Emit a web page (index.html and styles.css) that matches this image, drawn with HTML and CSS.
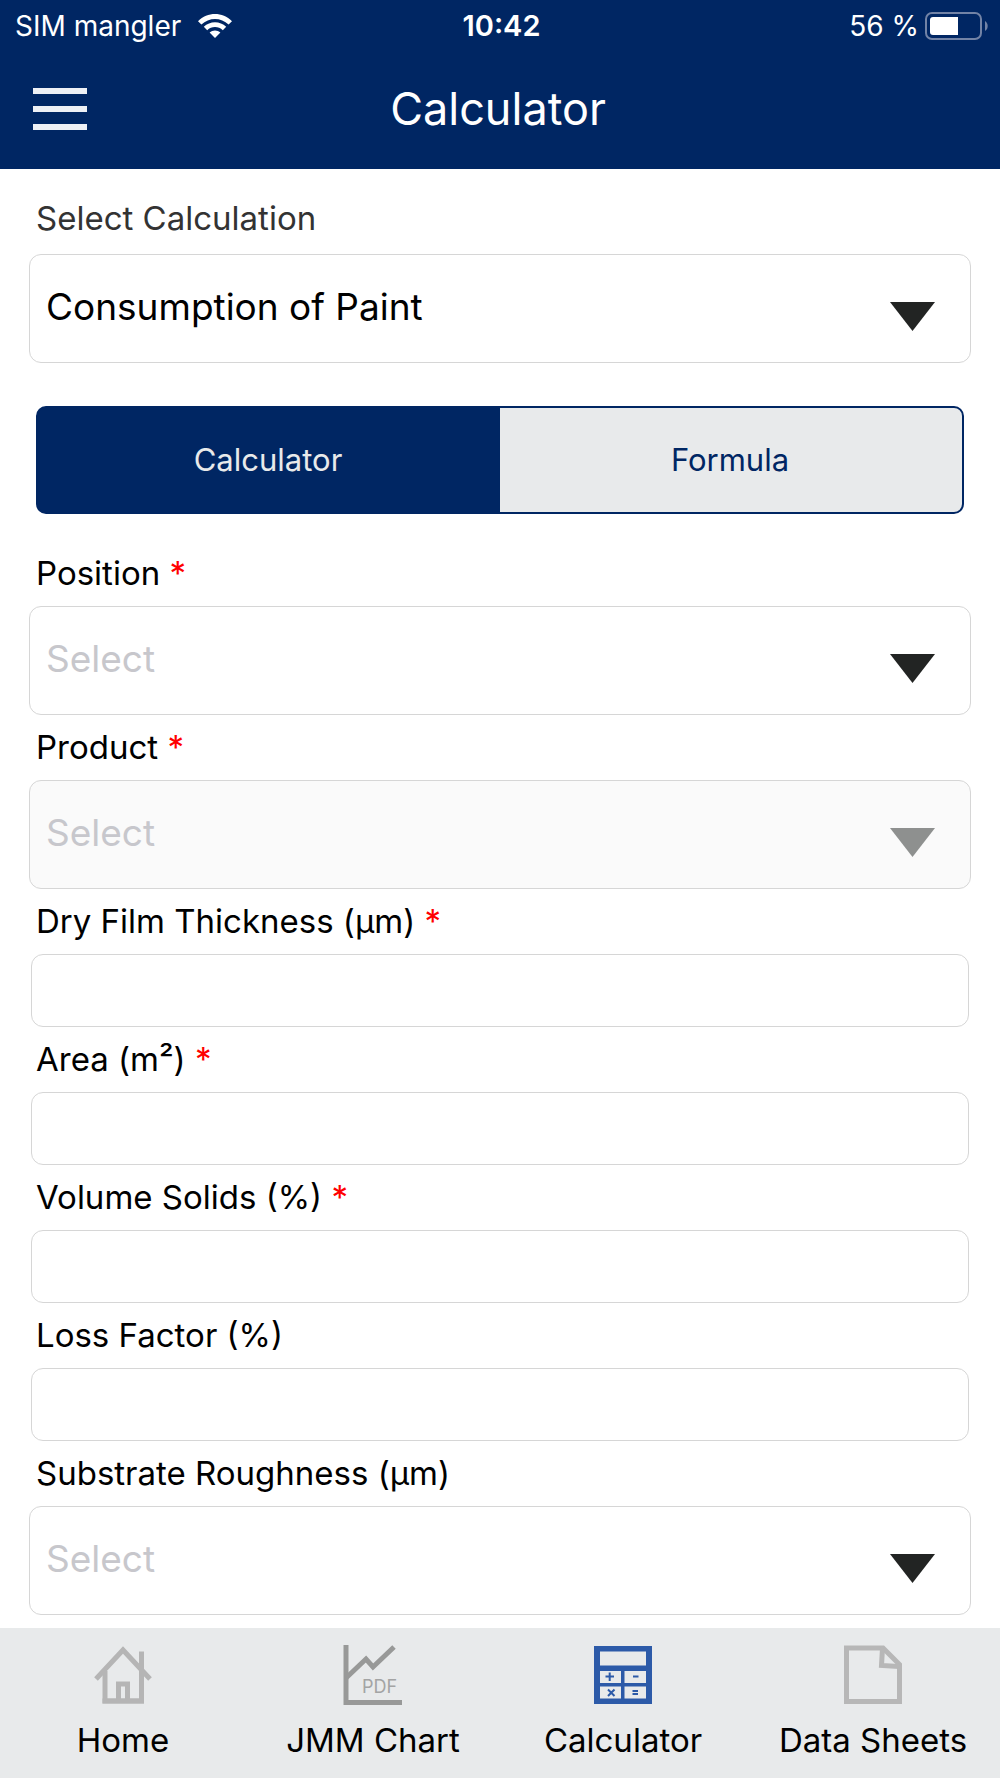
FILE: index.html
```html
<!DOCTYPE html>
<html lang="en">
<head>
    <meta charset="UTF-8">
    <meta name="viewport" content="width=device-width, initial-scale=1.0">
    <title>Calculator</title>
    <link rel="stylesheet" href="styles.css">
</head>
<body>

    <header class="header">
        <div class="status-bar">
            <div class="carrier">
                <span>SIM mangler</span>
                <svg class="wifi" viewBox="0 0 34 24" width="34" height="24">
                    <path d="M0 7.2C9.6-2.4 24.4-2.4 34 7.2L30.6 10.6C23 3 11 3 3.4 10.6Z" fill="#fff"/>
                    <path d="M5.8 12.8C12 6.6 22 6.6 28.2 12.8L24.8 16.2C20.5 11.9 13.5 11.9 9.2 16.2Z" fill="#fff"/>
                    <path d="M11.6 18.6C14.6 15.8 19.4 15.8 22.4 18.6L17 24Z" fill="#fff"/>
                </svg>
            </div>
            <div class="clock">10:42</div>
            <div class="battery">
                <span>56 %</span>
                <svg viewBox="0 0 63 28" width="63" height="28">
                    <rect x="1" y="1" width="55" height="26" rx="6" fill="none" stroke="#7283a6" stroke-width="2"/>
                    <path d="M8 5H33V23H8A3 3 0 0 1 5 20V8A3 3 0 0 1 8 5Z" fill="#fff"/>
                    <path d="M60 9C63.6 11 63.6 17 60 19Z" fill="#7283a6"/>
                </svg>
            </div>
        </div>
        <div class="nav-bar">
            <button class="menu-btn" type="button" aria-label="Menu">
                <span></span>
                <span></span>
                <span></span>
            </button>
            <h1>Calculator</h1>
        </div>
    </header>

    <main class="content">
        <label class="calc-label" for="calculation">Select Calculation</label>
        <div class="select-box">
            <select id="calculation">
                <option>Consumption of Paint</option>
            </select>
        </div>

        <div class="tabs">
            <button class="tab active" type="button">Calculator</button>
            <button class="tab" type="button">Formula</button>
        </div>

        <form class="fields">
            <label for="position">Position <span class="required">*</span></label>
            <div class="select-box">
                <select id="position" class="empty">
                    <option>Select</option>
                </select>
            </div>

            <label for="product">Product <span class="required">*</span></label>
            <div class="select-box disabled">
                <select id="product" class="empty" disabled>
                    <option>Select</option>
                </select>
            </div>

            <label for="thickness">Dry Film Thickness (µm) <span class="required">*</span></label>
            <input id="thickness" type="text" inputmode="decimal">

            <label for="area">Area (m²) <span class="required">*</span></label>
            <input id="area" type="text" inputmode="decimal">

            <label for="solids">Volume Solids (%) <span class="required">*</span></label>
            <input id="solids" type="text" inputmode="decimal">

            <label for="loss">Loss Factor (%)</label>
            <input id="loss" type="text" inputmode="decimal">

            <label for="roughness">Substrate Roughness (µm)</label>
            <div class="select-box">
                <select id="roughness" class="empty">
                    <option>Select</option>
                </select>
            </div>
        </form>
    </main>

    <nav class="bottom-nav">
        <a href="#home">
            <svg viewBox="0 0 60 60" width="60" height="60" fill="none" stroke="#b5b5b5">
                <path d="M3 34L30 5L57 34" stroke-width="5"/>
                <path d="M12 26V56H48.500V6.500" stroke-width="5"/>
                <path d="M9.500 56H51" stroke-width="5"/>
                <path d="M25.500 54V39H34.500V54" stroke-width="5"/>
            </svg>
            <span>Home</span>
        </a>
        <a href="#chart">
            <svg viewBox="0 0 60 60" width="60" height="60">
                <path d="M3 0V57.500H59" fill="none" stroke="#989998" stroke-width="5"/>
                <path d="M3 33L23 14L30 22L51 2" fill="none" stroke="#989998" stroke-width="5"/>
                <text class="pdf" x="19" y="48">PDF</text>
            </svg>
            <span>JMM Chart</span>
        </a>
        <a href="#calculator">
            <svg viewBox="0 0 60 60" width="60" height="60">
                <rect x="1" y="1" width="58" height="58" fill="#2c5aa8"/>
                <path d="M7 6.500H53V20.500H7ZM7 26H28V38H7ZM31.500 26H53V38H31.500ZM7 41.500H28V53.500H7ZM31.500 41.500H53V53.500H31.500Z" fill="#e8eaeb"/>
                <path d="M12.500 31.500H21M16.700 27.500V36M40 31.500H45.500M39.500 46H45M39.500 49H45M15 44.500L21.500 51M21.500 44.500L15 51" fill="none" stroke="#2c5aa8" stroke-width="2"/>
            </svg>
            <span>Calculator</span>
        </a>
        <a href="#datasheets">
            <svg viewBox="0 0 60 60" width="60" height="60" fill="none" stroke="#b7b7b7">
                <path d="M3.500 3H40L56.500 19.500V56.500H3.500Z" stroke-width="5"/>
                <path d="M39.500 3L38.500 20.500L56 21.500" stroke-width="5"/>
            </svg>
            <span>Data Sheets</span>
        </a>
    </nav>

</body>
</html>
```
FILE: styles.css
```css
* {
    box-sizing: border-box;
}

body {
    display: flex;
    flex-direction: column;
    min-height: 100vh;
    margin: 0;
    font-family: Inter, "Liberation Sans", sans-serif;
    font-size: 33px;
    line-height: 40px;
    color: #000;
    background-color: #fff;
}

button, select, input {
    font-family: inherit;
}

/* Header */
.header {
    padding-bottom: 2px;
    background-color: #002663;
    color: #fff;
}

.status-bar {
    display: grid;
    grid-template-columns: 1fr auto 1fr;
    align-items: center;
    height: 51px;
    padding: 0 12px 0 15px;
    font-size: 28px;
}

.carrier, .battery {
    display: flex;
    align-items: center;
    gap: 17px;
}

.battery {
    justify-content: flex-end;
    gap: 6px;
}

.clock {
    font-size: 29px;
    font-weight: 600;
}

.nav-bar {
    display: grid;
    grid-template-columns: 100px 1fr 104px;
    align-items: center;
    height: 116px;
}

.nav-bar h1 {
    margin: 0;
    font-size: 45px;
    font-weight: 400;
    text-align: center;
}

.menu-btn {
    display: flex;
    flex-direction: column;
    gap: 12px;
    padding: 0 13px 0 33px;
    border: none;
    background: none;
    cursor: pointer;
}

.menu-btn span {
    width: 100%;
    height: 6px;
    background-color: #edf0f6;
}

/* Form */
.content {
    flex: 1;
    padding: 29px 29px 13px;
}

label {
    display: block;
    margin: 12px 7px 13px;
}

.calc-label {
    margin: 0 7px 16px;
    color: #333;
}

.select-box {
    position: relative;
}

/* Arrow on top of the native drop-down */
.select-box::after {
    content: "";
    position: absolute;
    top: 48px;
    right: 36px;
    width: 45px;
    height: 29px;
    background-color: #222423;
    clip-path: polygon(0 0, 100% 0, 50% 100%);
    pointer-events: none;
}

.select-box.disabled::after {
    background-color: #8e908f;
}

select {
    display: block;
    width: 100%;
    height: 109px;
    padding: 0 90px 5px 16px;
    border: 1px solid #d6d6d6;
    border-radius: 12px;
    appearance: none;
    background-color: #fff;
    color: #000;
    font-size: 37px;
}

select.empty {
    color: #c7c7cc;
}

select:disabled {
    background-color: #fafafa;
    opacity: 1;
}

input {
    display: block;
    width: calc(100% - 4px);
    height: 73px;
    margin: 0 2px;
    padding: 0 16px;
    border: 1px solid #d6d6d6;
    border-radius: 12px;
    background-color: #fff;
    font-size: 33px;
}

.required {
    color: #f00;
}

.tabs {
    display: flex;
    height: 108px;
    margin: 43px 7px 39px;
    border: 2px solid #002663;
    border-radius: 10px;
    background: linear-gradient(to right, #002663 50%, #e8eaeb 50%);
}

.tab {
    flex: 1;
    padding: 0 2px 2px 0;
    border: none;
    background: none;
    color: #002663;
    font-size: 31px;
    cursor: pointer;
}

.tab.active {
    color: #e8eaeb;
}

/* Bottom navigation */
.bottom-nav {
    position: sticky;
    bottom: 0;
    display: grid;
    grid-template-columns: repeat(4, 1fr);
    padding: 17px 0 18px;
    background-color: #e8eaeb;
}

.bottom-nav a {
    display: flex;
    flex-direction: column;
    align-items: center;
    gap: 15px;
    padding-right: 4px;
    color: #000;
    text-decoration: none;
}

.pdf {
    fill: #a3a4a4;
    font-size: 18px;
}
```
